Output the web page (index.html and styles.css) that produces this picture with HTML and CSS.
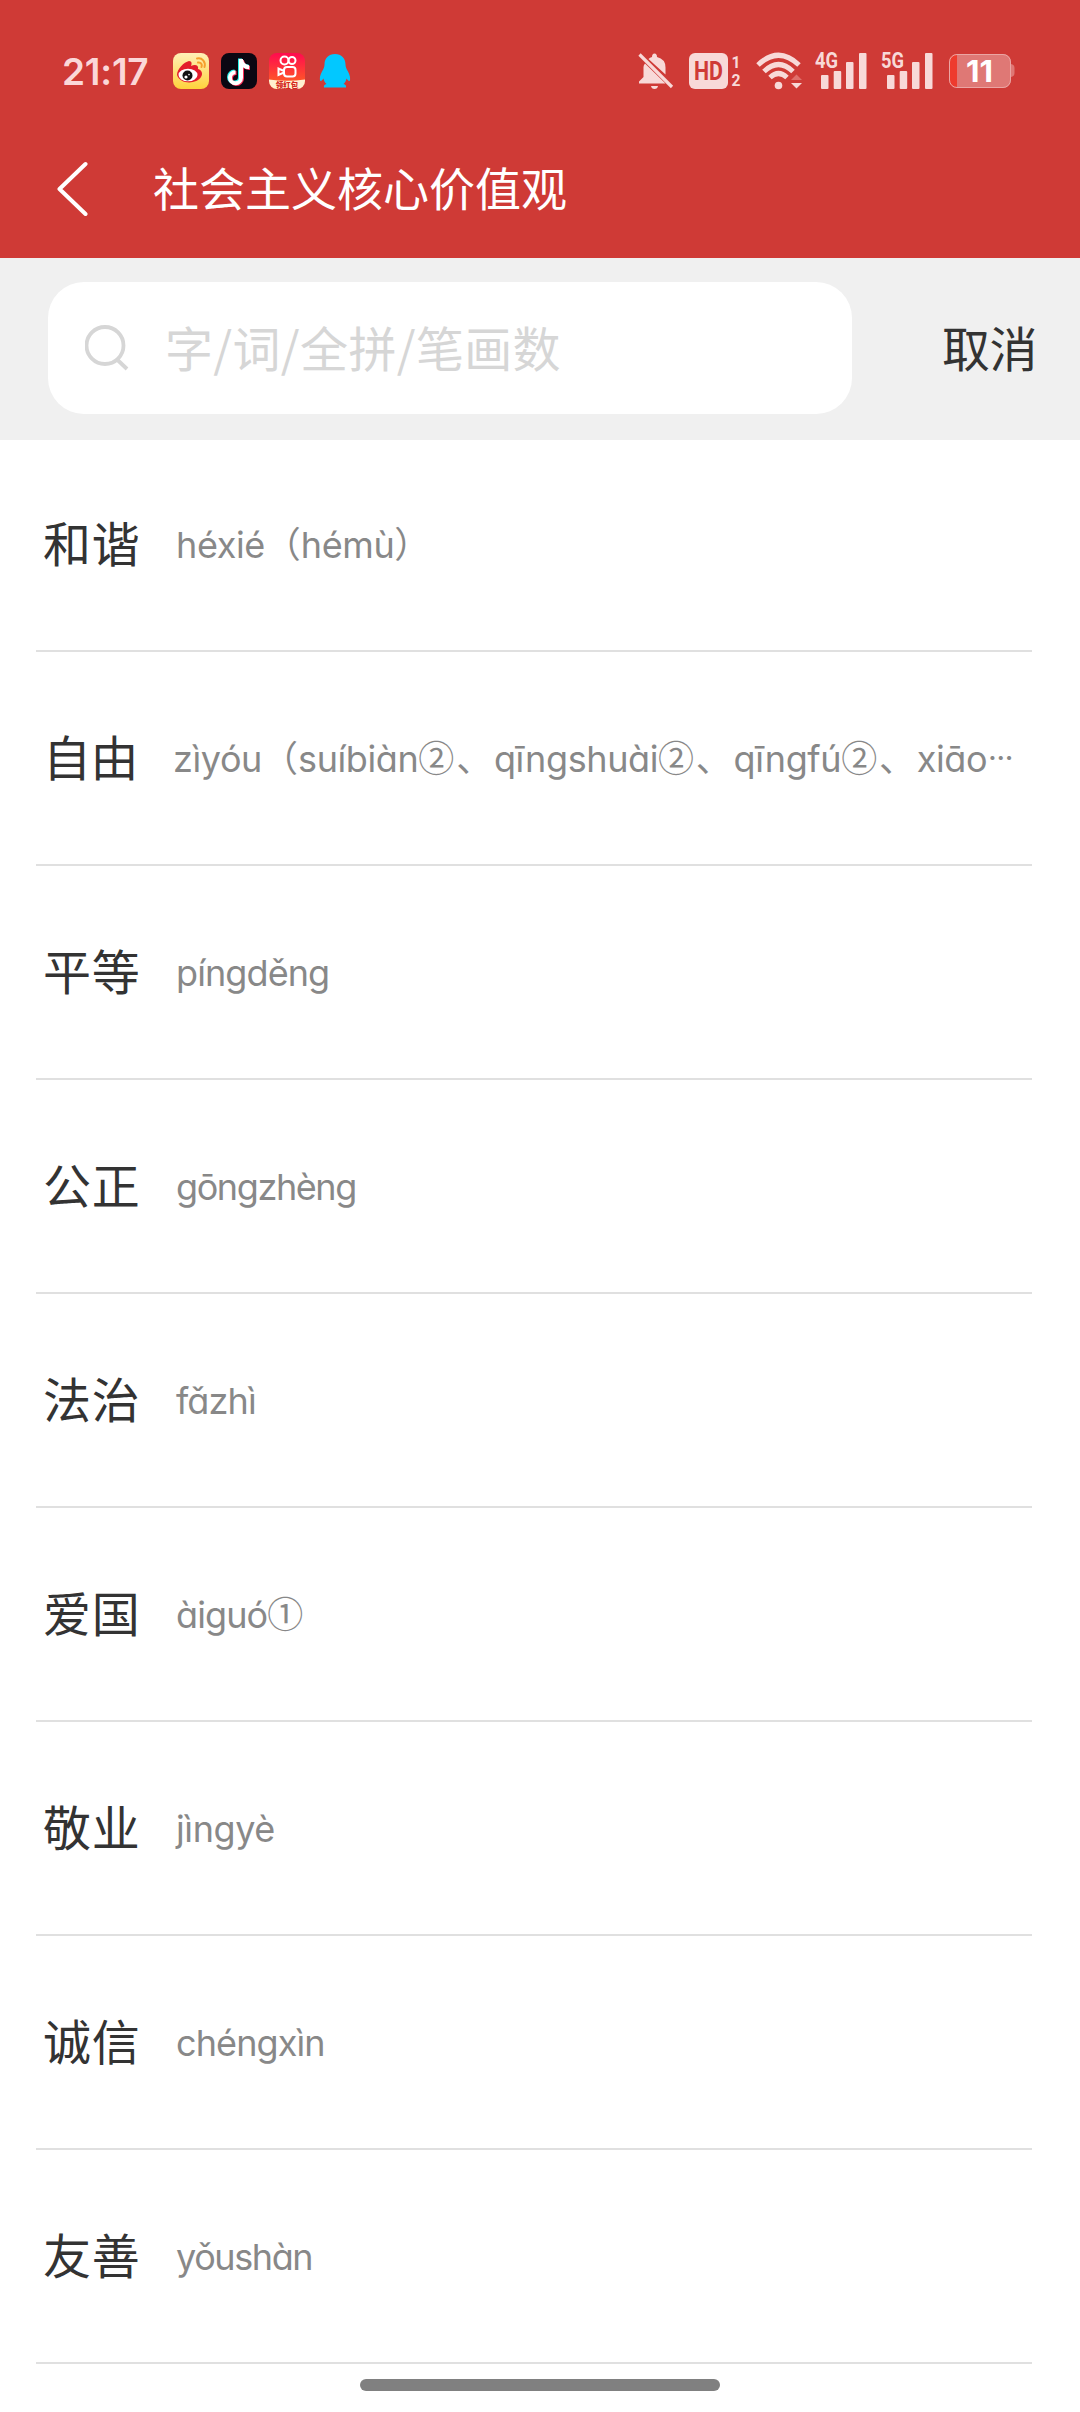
FILE: index.html
```html
<!DOCTYPE html>
<html lang="zh-CN">
<head>
<meta charset="utf-8">
<title>社会主义核心价值观</title>
<link rel="stylesheet" href="styles.css">
</head>
<body>
<header class="header">
  <div class="status">
    <div class="status-left">
      <span class="clock">21:17</span>
      <svg class="app" viewBox="0 0 36 36">
        <defs><linearGradient id="wb" x1="0" y1="0" x2="0" y2="1"><stop offset="0" stop-color="#fff0b8"/><stop offset="1" stop-color="#ffd23c"/></linearGradient></defs>
        <rect width="36" height="36" rx="8" fill="url(#wb)"/>
        <path d="M4 22C4 16 11 9 16 8C19 8 19 11 18 13C22 11 26 12 25 16C29 17 30 21 28 24C24 31 7 32 4 22Z" fill="#e31d2b"/>
        <ellipse cx="15" cy="22" rx="9.5" ry="6.3" fill="#fff"/>
        <circle cx="14.5" cy="22.5" r="5" fill="#111"/>
        <circle cx="13" cy="24" r="1.6" fill="#fff"/><circle cx="16" cy="21.6" r=".8" fill="#fff"/>
        <path d="M24 5.5C29 4 33 9 31.5 14M25 9.500C28 9 29.500 11.500 28.500 14" fill="none" stroke="#f6a02c" stroke-width="2" stroke-linecap="round"/>
      </svg>
      <svg class="app" viewBox="0 0 36 36">
        <rect width="36" height="36" rx="8" fill="#0b0712"/>
        <g fill="none" stroke-width="4">
          <path d="M19 5.500V24A5.500 5.500 0 1 1 13.500 18.500M19 6C20 11 23 13.500 27.500 13.500" stroke="#2af0ea"/>
          <path d="M21 7V25.500A5.500 5.500 0 1 1 15.500 20M21 7.500C22 12 25 15 29 15" stroke="#fb2c55"/>
          <path d="M20 6V24.700A5.500 5.500 0 1 1 14.500 19.200M20 6.500C21 11.500 24 14.200 28.200 14.200" stroke="#fff"/>
        </g>
      </svg>
      <svg class="app" viewBox="0 0 36 36">
        <defs><linearGradient id="ks" x1="0" y1="0" x2="0" y2="1"><stop offset="0" stop-color="#ff0a50"/><stop offset="1" stop-color="#ff6a1c"/></linearGradient><clipPath id="kc"><rect width="36" height="36" rx="8"/></clipPath></defs>
        <g clip-path="url(#kc)">
          <rect width="36" height="36" fill="url(#ks)"/>
          <path d="M0 26.500Q18 29 36 26.500V36H0Z" fill="#fff0d0"/>
          <g fill="none" stroke="#fff" stroke-width="2"><circle cx="15.500" cy="7.500" r="4"/><circle cx="23" cy="7.500" r="3.500"/><rect x="15" y="14" width="11.500" height="9.500" rx="3"/><path d="M15 18L9.500 15.500V22L15 19.500"/></g>
          <text class="ribbon" x="18" y="34.500" text-anchor="middle">领红包</text>
        </g>
      </svg>
      <svg class="app" viewBox="0 0 36 36">
        <path d="M18 1C11.500 1 7.500 5.500 7.500 11.500C7.500 14 6.500 16 5 18.500C3 22 2.300 26 3.300 28C4.500 28.500 5.700 26.500 6.500 25.500C7 28 8 29.700 9.500 31C7.500 31.500 6.500 32.500 7 34.500H29C29.500 32.500 28.500 31.500 26.500 31C28 29.700 29 28 29.500 25.500C30.300 26.500 31.500 28.500 32.700 28C33.700 26 33 22 31 18.500C29.500 16 28.500 14 28.500 11.500C28.500 5.500 24.500 1 18 1Z" fill="#02c8ff"/>
      </svg>
    </div>
    <div class="status-right">
      <svg class="bell" viewBox="0 0 36 36">
        <path d="M7 10.500L27.500 30.500H1V28.500L5.500 24V14Q5.500 12 7 10.500ZM10.500 6Q12 4.500 14 4Q14 .5 16.500 .5T19 4Q27.500 6 27.500 14.500V21.500ZM13 33H20Q19.500 36 16.500 36T13 33Z" fill="#f8d9d8"/>
        <path d="M1.500 1.500L34 34" stroke="#f8d9d8" stroke-width="3.200"/>
      </svg>
      <svg class="hd" viewBox="0 0 52 38">
        <rect y="1" width="39" height="36" rx="6" fill="#f8d9d8"/>
        <text class="hd-text" x="5" y="28" textLength="29" lengthAdjust="spacingAndGlyphs">HD</text>
        <text class="sim" x="42.500" y="16" textLength="9" lengthAdjust="spacingAndGlyphs">1</text>
        <text class="sim" x="42.500" y="34" textLength="9" lengthAdjust="spacingAndGlyphs">2</text>
      </svg>
      <svg class="wifi" viewBox="0 0 46 38">
        <g fill="none" stroke="#f8d9d8" stroke-width="5"><path d="M2 13Q22.500 -6.500 43 13"/><path d="M8 19.500Q22.500 5.500 37 19.500"/><path d="M14 25.500Q22.500 17.500 31 25.500"/></g>
        <circle cx="22.500" cy="33.500" r="3.800" fill="#f8d9d8"/>
        <path d="M35 28L40.500 22.500L46 28Z" fill="#e06f6b"/><path d="M35 31L40.500 36.500L46 31Z" fill="#f8d9d8"/>
      </svg>
      <svg class="signal" viewBox="0 -6 52 50">
        <text class="net" x="0" y="16" textLength="23" lengthAdjust="spacingAndGlyphs">4G</text>
        <g fill="#f8d9d8"><rect x="6" y="23" width="7.500" height="14" rx="1"/><rect x="18.700" y="19" width="7.500" height="18" rx="1"/><rect x="31" y="10" width="7.500" height="27" rx="1"/><rect x="44" y="1" width="7.500" height="36" rx="1"/></g>
      </svg>
      <svg class="signal" viewBox="0 -6 52 50">
        <text class="net" x="0" y="16" textLength="23" lengthAdjust="spacingAndGlyphs">5G</text>
        <g fill="#f8d9d8"><rect x="6" y="23" width="7.500" height="14" rx="1"/><rect x="18.700" y="19" width="7.500" height="18" rx="1"/><rect x="31" y="10" width="7.500" height="27" rx="1"/><rect x="44" y="1" width="7.500" height="36" rx="1"/></g>
      </svg>
      <svg class="battery" viewBox="0 0 68 36">
        <defs><clipPath id="bc"><rect x="1" y="1" width="62" height="34" rx="8"/></clipPath></defs>
        <path d="M63 11Q66.500 11.500 66.500 15V20Q66.500 23.500 63 24Z" fill="#df7875"/>
        <rect x="1" y="1" width="62" height="34" rx="8" fill="#df7875"/>
        <rect x="1" y="1" width="8" height="34" fill="#ee3b2e" clip-path="url(#bc)"/>
        <rect x="1.500" y="1.500" width="61" height="33" rx="7.500" fill="none" stroke="#eba5a3"/>
        <text class="level" x="18" y="29" textLength="27" lengthAdjust="spacingAndGlyphs">11</text>
      </svg>
    </div>
  </div>
  <div class="title-bar">
    <svg class="back" viewBox="0 0 32 56"><path d="M29.500 3L3.500 28L29.500 53" fill="none" stroke="#fff" stroke-width="4" stroke-linecap="round" stroke-linejoin="round"/></svg>
    <h1 class="title">社会主义核心价值观</h1>
  </div>
</header>
<div class="search-bar">
  <div class="search-box">
    <svg class="search-icon" viewBox="0 0 44 46"><circle cx="20" cy="20.500" r="18.500" stroke-width="3.800"/><path d="M31.500 34L42 44" stroke-width="3.800"/></svg>
    <span class="placeholder">字/词/全拼/笔画数</span>
  </div>
  <span class="cancel">取消</span>
</div>
<ul class="list">
  <li class="row"><span class="word">和谐</span><span class="pinyin wide">héxié<span class="zh">（</span>hémù<span class="zh">）</span></span></li>
  <li class="row row-long"><span class="word">自由</span><span class="pinyin wide">zìyóu<span class="zh">（</span>suíbiàn<span class="zh pair">②、</span>qīngshuài<span class="zh pair">②、</span>qīngfú<span class="zh pair">②、</span>xiāo<span class="more">⋯</span></span></li>
  <li class="row"><span class="word">平等</span><span class="pinyin">píngděng</span></li>
  <li class="row"><span class="word">公正</span><span class="pinyin tight">gōngzhèng</span></li>
  <li class="row"><span class="word">法治</span><span class="pinyin">fǎzhì</span></li>
  <li class="row"><span class="word">爱国</span><span class="pinyin">àiguó<span class="zh">①</span></span></li>
  <li class="row"><span class="word">敬业</span><span class="pinyin wide">jìngyè</span></li>
  <li class="row"><span class="word">诚信</span><span class="pinyin">chéngxìn</span></li>
  <li class="row"><span class="word">友善</span><span class="pinyin tight">yǒushàn</span></li>
</ul>
<div class="home-indicator"></div>
</body>
</html>
```
FILE: styles.css
```css
* { box-sizing: border-box; }
body {
  margin: 0;
  width: 1080px;
  height: 2412px;
  overflow: hidden;
  background: #fff;
  color: #333;
  font-family: Inter, "Noto Sans CJK SC", sans-serif;
}
svg { display: block; flex: none; }
.header { height: 258px; background: #cf3a36; color: #fff; }
.status {
  display: flex;
  justify-content: space-between;
  height: 122px;
  padding: 20px 64px 0 62px;
}
.status-left, .status-right { display: flex; align-items: center; height: 102px; }
.clock { width: 111px; font-size: 37px; font-weight: 600; color: #fbd7d8; letter-spacing: -.2px; }
.app { width: 36px; height: 36px; margin-right: 12px; }
.ribbon { font: 900 7.5px "Noto Sans CJK SC", sans-serif; fill: #d5281e; }
.bell { width: 36px; height: 36px; margin-right: 15px; }
.hd { width: 52px; height: 38px; margin-right: 15px; }
.wifi { width: 46px; height: 38px; margin-right: 13px; }
.signal { width: 52px; height: 50px; margin-right: 14px; }
.battery { width: 68px; height: 36px; margin-left: 1px; }
.hd-text { font: 700 25px Roboto, sans-serif; fill: #cf3a36; }
.sim { font: 700 17px Roboto, sans-serif; fill: #f8d9d8; }
.net { font: 700 22px Roboto, sans-serif; fill: #f8d9d8; }
.level { font: 700 30px Inter, sans-serif; fill: #fff; }
.title-bar { display: flex; align-items: center; height: 134px; padding-left: 56px; }
.back { width: 32px; height: 56px; margin-right: 65px; }
.title { margin: 0; padding-bottom: 6px; font: 400 46px/64px "Noto Sans CJK SC", sans-serif; }
.search-bar {
  display: flex;
  align-items: center;
  height: 182px;
  padding: 24px 42px 26px 48px;
  background: #f0f0f0;
}
.search-box {
  display: flex;
  align-items: center;
  width: 804px;
  height: 132px;
  padding-left: 37px;
  border-radius: 36px;
  background: #fff;
}
.search-icon { width: 44px; height: 46px; margin-right: 36px; fill: none; stroke: #d6d6d6; }
.placeholder { padding-bottom: 4px; font: 400 48px/70px "Noto Sans CJK SC", sans-serif; color: #d6d6d6; letter-spacing: .35px; }
.cancel { margin-left: 90px; padding-bottom: 4px; font: 400 48px/70px "Noto Sans CJK SC", sans-serif; letter-spacing: -.5px; white-space: nowrap; }
.list { margin: 0; padding: 0 48px 0 36px; list-style: none; }
.row {
  display: flex;
  align-items: center;
  height: 214px;
  padding-left: 7px;
  border-bottom: 2px solid #e0e0e0;
  white-space: nowrap;
}
.row:first-child { height: 212px; padding-bottom: 2px; }
.word { width: 133px; padding-bottom: 6px; font: 400 48px/70px "Noto Sans CJK SC", sans-serif; letter-spacing: .8px; }
.pinyin {
  padding-top: 2px;
  font-size: 36px;
  font-weight: 400;
  line-height: 54px;
  color: #888;
  letter-spacing: -.9px;
  font-feature-settings: "cv11";
}
.wide { letter-spacing: -.4px; }
.tight { letter-spacing: -1.4px; }
.zh { font-family: "Noto Sans CJK SC", sans-serif; line-height: 1; letter-spacing: 0; }
.pair { letter-spacing: 1.8px; }
.more { margin-left: 1px; font: 700 25px/1 "Noto Sans CJK SC", sans-serif; vertical-align: 4px; }
.row-long .word { width: 132px; letter-spacing: -.5px; }
.row-long .pinyin { margin-left: -2px; }
.home-indicator { width: 360px; height: 12px; margin: 15px auto 0; border-radius: 6px; background: #808080; }
```
